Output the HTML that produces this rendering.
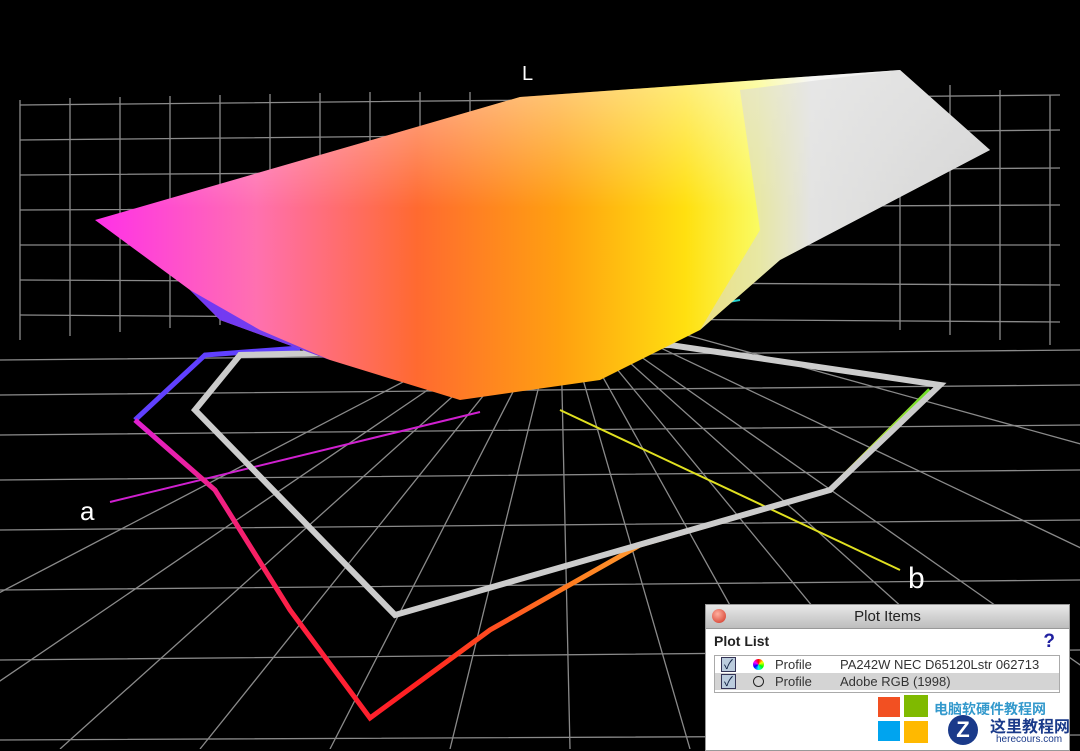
<!DOCTYPE html>
<html><head><style>
body{margin:0;background:#000;width:1080px;height:749px;overflow:hidden;position:relative;font-family:"Liberation Sans","Noto Sans CJK SC",sans-serif}
svg{position:absolute;left:0;top:0}
.panel{position:absolute;left:705px;top:604px;width:363px;height:145px;background:#fff;border:1px solid #999;overflow:hidden}
.tb{height:23px;background:linear-gradient(#e8e8e8,#bdbdbd);border-bottom:1px solid #999;text-align:center;font-size:15px;line-height:23px;color:#222}
.dot{position:absolute;left:6px;top:4px;width:14px;height:14px;border-radius:50%;background:radial-gradient(circle at 40% 35%,#ffb0a0,#d03020)}
.pl{font-size:14px;font-weight:bold;color:#222;position:absolute;left:8px;top:28px}
.q{position:absolute;right:14px;top:26px;color:#2020a0;font-weight:bold;font-size:19px}
.list{position:absolute;left:8px;top:50px;width:344px;height:36px;border:1px solid #aaa}
.row{height:17px;font-size:13px;color:#333;position:relative;line-height:17px}
.row span{position:absolute}
.cb{left:6px;top:1px;width:13px;height:13px;border:1px solid #335;background:#bcd;color:#124;font-size:13px;line-height:13px;text-align:center}
</style></head><body>
<svg width="1080" height="749">
<defs>
<linearGradient id="s" x1="95" y1="0" x2="990" y2="0" gradientUnits="userSpaceOnUse">
<stop offset="0" stop-color="#ff30e8"/><stop offset=".18" stop-color="#ff70b0"/><stop offset=".36" stop-color="#ff6a30"/><stop offset=".52" stop-color="#ffa010"/><stop offset=".66" stop-color="#ffe010"/><stop offset=".74" stop-color="#fafa60"/><stop offset=".8" stop-color="#f0f0ee"/><stop offset="1" stop-color="#d0d0d0"/></linearGradient>
<linearGradient id="w" x1="0" y1="80" x2="0" y2="400" gradientUnits="userSpaceOnUse">
<stop offset="0" stop-color="#fff" stop-opacity=".45"/><stop offset=".4" stop-color="#fff" stop-opacity="0"/></linearGradient>
<linearGradient id="g" x1="135" y1="0" x2="940" y2="0" gradientUnits="userSpaceOnUse">
<stop offset="0" stop-color="#e020d0"/><stop offset=".2" stop-color="#ff2040"/><stop offset=".35" stop-color="#ff2020"/><stop offset=".55" stop-color="#ff8020"/><stop offset=".85" stop-color="#ffe060"/><stop offset="1" stop-color="#60e020"/></linearGradient>
</defs>
<g stroke="#8a8a8a" stroke-width="1.3" fill="none">
<path d="M20,100 L20,340 M70,98 L70,336 M120,97 L120,332 M170,96 L170,328 M220,95 L220,325 M270,94 L270,322 M320,93 L320,320 M370,92 L370,318 M420,92 L420,316 M470,92 L470,315 M900,80 L900,330 M950,85 L950,335 M1000,90 L1000,340 M1050,95 L1050,345"/>
<path d="M20,105 L1060,95 M20,140 L1060,130 M20,175 L1060,168 M20,210 L1060,205 M20,245 L1060,245 M20,280 L1060,285 M20,315 L1060,322"/>
<path d="M0,360 L1080,350 M0,395 L1080,385 M0,435 L1080,425 M0,480 L1080,470 M0,530 L1080,520 M0,590 L1080,580 M0,660 L1080,650 M0,740 L1080,735"/>
<path d="M560,300 L-300,749 M560,300 L-100,749 M560,300 L60,749 M560,300 L200,749 M560,300 L330,749 M560,300 L450,749 M560,300 L570,749 M560,300 L690,749 M560,300 L810,749 M560,300 L930,749 M560,300 L1060,749 M560,300 L1200,749 M560,300 L1400,700 M560,300 L1500,560"/>
</g>
<line x1="110" y1="502" x2="480" y2="412" stroke="#d020d0" stroke-width="2"/>
<line x1="560" y1="410" x2="900" y2="570" stroke="#e0e020" stroke-width="2"/>
<line x1="560" y1="330" x2="740" y2="300" stroke="#20d0d0" stroke-width="2"/>
<polyline points="135,420 205,355 300,348" fill="none" stroke="#6040ff" stroke-width="5"/>
<polyline points="135,420 215,490 290,610 370,718 490,630 640,545 830,490 930,390" fill="none" stroke="url(#g)" stroke-width="5"/>
<polygon points="240,355 195,410 395,615 830,490 940,385 670,345" fill="none" stroke="#ccc" stroke-width="6"/>
<polygon points="95,220 520,97 900,70 990,150 780,260 700,330 600,380 460,400 330,360 220,320 190,290" fill="url(#s)"/>
<polygon points="95,220 520,97 900,70 990,150 780,260 700,330 600,380 460,400 330,360 220,320 190,290" fill="url(#w)"/>
<polygon points="740,90 900,70 990,150 780,260 700,330 760,230" fill="#d8d8d8" opacity=".55"/>
<polygon points="190,290 220,320 330,360 260,330" fill="#5030ff" opacity=".8"/>
<text x="522" y="80" fill="#fff" font-size="20" font-family="Liberation Sans">L</text>
<text x="80" y="520" fill="#fff" font-size="26" font-family="Liberation Sans">a</text>
<text x="908" y="588" fill="#fff" font-size="30" font-family="Liberation Sans">b</text>
</svg>
<div class="panel">
<div class="tb"><div class="dot"></div>Plot Items</div>
<div class="pl">Plot List</div><div class="q">?</div>
<div class="list">
<div class="row"><span class="cb">✓</span><span style="left:38px;top:3px;width:11px;height:11px;border-radius:50%;background:conic-gradient(red,yellow,lime,cyan,blue,magenta,red)"></span><span style="left:60px">Profile</span><span style="left:125px">PA242W NEC D65120Lstr 062713</span></div>
<div class="row" style="background:#d4d4d4"><span class="cb">✓</span><span style="left:38px;top:3px;width:9px;height:9px;border-radius:50%;border:1.5px solid #222"></span><span style="left:60px">Profile</span><span style="left:125px">Adobe RGB (1998)</span></div>
</div>
<div style="position:absolute;left:172px;top:92px;width:22px;height:20px;background:#f25022"></div>
<div style="position:absolute;left:198px;top:90px;width:24px;height:22px;background:#7fba00"></div>
<div style="position:absolute;left:172px;top:116px;width:22px;height:20px;background:#00a4ef"></div>
<div style="position:absolute;left:198px;top:116px;width:24px;height:22px;background:#ffb900"></div>
<div style="position:absolute;left:228px;top:94px;color:#39c;font-size:14px;font-weight:bold;white-space:nowrap">电脑软硬件教程网</div>
<div style="position:absolute;left:240px;top:110px;width:125px;height:36px;background:#fff"></div>
<div style="position:absolute;left:242px;top:110px;width:30px;height:30px;border-radius:50%;background:#1a3a8a;color:#fff;text-align:center;font-weight:bold;font-size:22px;line-height:30px">Z</div>
<div style="position:absolute;left:284px;top:108px;color:#1a3a8a;font-size:16px;font-weight:bold;white-space:nowrap">这里教程网</div>
<div style="position:absolute;left:290px;top:129px;color:#1a3a8a;font-size:10px;white-space:nowrap">herecours.com</div>
</div>
</body></html>
